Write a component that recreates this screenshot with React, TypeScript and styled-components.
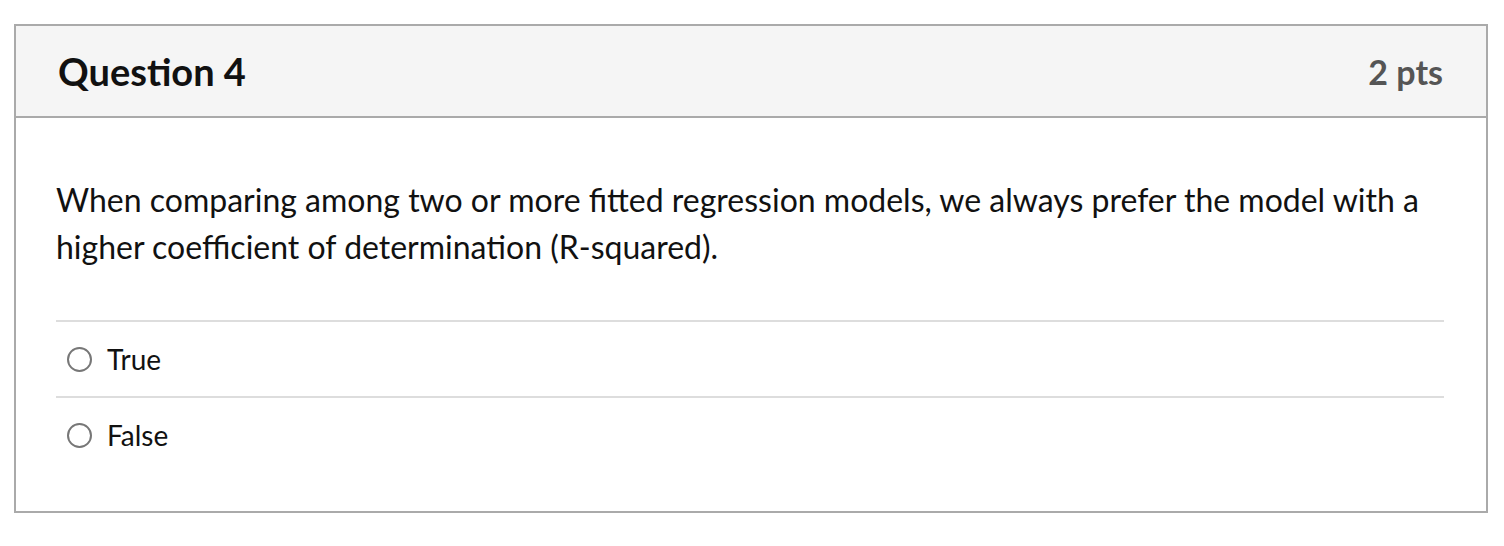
import styled, { createGlobalStyle } from 'styled-components'

const GlobalStyle = createGlobalStyle`
  body {
    margin: 0;
    background: #fff;
    font-family: Lato, "Noto Sans", sans-serif;
    color: #111;
  }
`

const answers = ['True', 'False']

function App() {
  return (
    <>
      <GlobalStyle />
      <Page>
        <Card>
          <Header>
            <Title>Question 4</Title>
            <Points>2 pts</Points>
          </Header>
          <Body>
            <Text>
              When comparing among two or more fitted regression models, we always prefer the model with a
              higher coefficient of determination (R-squared).
            </Text>
            <Answers>
              {answers.map(a => (
                <Answer key={a}>
                  <Radio />
                  <Label>{a}</Label>
                </Answer>
              ))}
            </Answers>
          </Body>
        </Card>
      </Page>
    </>
  )
}

const Page = styled.div`
  padding: 24px 16px 0 14px;
`

const Card = styled.div`
  width: 1474px;
  box-sizing: border-box;
  border: 2px solid #aaaaaa;
`

const Header = styled.div`
  height: 92px;
  box-sizing: border-box;
  display: flex;
  align-items: center;
  justify-content: space-between;
  padding: 0 43px 0 42px;
  background: #f5f5f5;
  border-bottom: 2px solid #aaaaaa;
`

const Title = styled.h2`
  margin: 0;
  font-size: 38px;
  font-weight: 700;
  color: #111;
`

const Points = styled.span`
  font-size: 34px;
  font-weight: 700;
  color: #555;
`

const Body = styled.div`
  padding: 58px 42px 39px 40px;
`

const Text = styled.p`
  margin: 0 0 50px;
  font-size: 32px;
  line-height: 47px;
`

const Answers = styled.div`
  display: flex;
  flex-direction: column;
`

const Answer = styled.div`
  height: 76px;
  box-sizing: border-box;
  display: flex;
  align-items: center;
  padding-left: 11px;
  border-top: 2px solid #dddddd;
`

const Radio = styled.span`
  width: 25px;
  height: 25px;
  box-sizing: border-box;
  border-radius: 50%;
  border: 2px solid #777;
  margin-right: 15px;
`

const Label = styled.span`
  font-size: 28px;
`

export default App
